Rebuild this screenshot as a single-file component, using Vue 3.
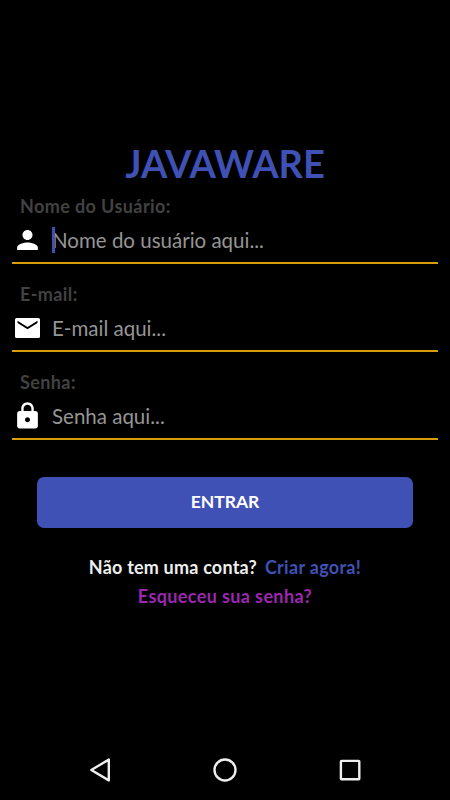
<template>
  <div class="screen">
    <main class="login">
      <h1 class="title">JAVAWARE</h1>

      <div v-for="field in fields" :key="field.id" class="field">
        <div class="label">{{ field.label }}</div>
        <div class="input-row">
          <svg class="icon" viewBox="0 0 24 24"><path :d="field.icon" /></svg>
          <div class="input">
            <span v-if="field.focused" class="cursor"></span>
            <span>{{ field.placeholder }}</span>
          </div>
        </div>
      </div>

      <button class="button">ENTRAR</button>

      <p class="signup">
        <span>Não tem uma conta?</span>
        <a class="create">Criar agora!</a>
      </p>
      <a class="forgot">Esqueceu sua senha?</a>
    </main>

    <nav class="nav-bar">
      <svg viewBox="0 0 30 30"><path d="M6.3 15 L23.8 4.6 V25.4 Z" /></svg>
      <svg viewBox="0 0 30 30"><circle cx="15" cy="15" r="10.5" /></svg>
      <svg viewBox="0 0 30 30"><rect x="5.9" y="5.9" width="18.4" height="18.4" rx="0.6" /></svg>
    </nav>
  </div>
</template>

<script setup>
const fields = [
  {
    id: 'name',
    label: 'Nome do Usuário:',
    placeholder: 'Nome do usuário aqui...',
    focused: true,
    icon: 'M12 12c2.21 0 4-1.79 4-4s-1.79-4-4-4-4 1.79-4 4 1.79 4 4 4zm0 2c-2.8 0-8.3 1.34-8.3 4v2h16.6v-2c0-2.66-5.5-4-8.3-4z'
  },
  {
    id: 'email',
    label: 'E-mail:',
    placeholder: 'E-mail aqui...',
    icon: 'M20.7 4H3.3C2.6 4 2 4.6 2 5.3v13.4c0 .7.6 1.3 1.3 1.3h17.4c.7 0 1.3-.6 1.3-1.3V5.3c0-.7-.6-1.3-1.3-1.3zM20 8l-8 5-8-5V6.2l8 5 8-5z'
  },
  {
    id: 'password',
    label: 'Senha:',
    placeholder: 'Senha aqui...',
    icon: 'M18.3 8H17V6c0-2.76-2.24-5-5-5S7 3.24 7 6v2H5.7c-1.1 0-2 .9-2 2v10c0 1.1.9 2 2 2h12.6c1.1 0 2-.9 2-2V10c0-1.1-.9-2-2-2zm-6.3 9c-1.1 0-2-.9-2-2s.9-2 2-2 2 .9 2 2-.9 2-2 2zm3.1-9H8.9V6c0-1.71 1.39-3.1 3.1-3.1s3.1 1.39 3.1 3.1v2z'
  }
]
</script>

<style>
body {
  background: #000;
}
</style>

<style scoped>
.screen {
  display: flex;
  flex-direction: column;
  box-sizing: border-box;
  height: 800px;
  padding-top: 140px;
  overflow: hidden;
  background: #000;
  font-family: Lato, "Open Sans", sans-serif;
  white-space: nowrap;
}

.login {
  flex: 1;
  display: flex;
  flex-direction: column;
}

.title {
  margin: 0 0 1px;
  height: 47px;
  line-height: 47px;
  text-align: center;
  font-size: 38px;
  font-weight: 700;
  color: #3f51b5;
}

.field {
  box-sizing: border-box;
  height: 88px;
  padding: 8px 12px 0;
}

.label {
  height: 22px;
  line-height: 20px;
  padding-left: 8px;
  font-size: 18px;
  font-weight: 700;
  letter-spacing: 0.4px;
  color: #424242;
}

.input-row {
  display: flex;
  align-items: center;
  height: 44px;
  border-bottom: 2px solid #d69c0a;
}

.icon {
  width: 31px;
  height: 30px;
  fill: #fff;
}

.input {
  position: relative;
  height: 26px;
  margin-left: 9px;
  line-height: 26px;
  font-size: 20.5px;
  color: #959595;
}

.cursor {
  position: absolute;
  left: 0;
  top: 0;
  width: 3px;
  height: 26px;
  background: #3f51b5;
}

.button {
  height: 51px;
  margin: 25px 37px 0;
  padding: 0 0 2px;
  border: 0;
  border-radius: 7px;
  background: #3f51b5;
  font: 700 17.5px Lato, sans-serif;
  color: #fff;
}

.signup {
  display: flex;
  justify-content: center;
  gap: 8px;
  margin: 24px 0 0;
  line-height: 30px;
  font-size: 18px;
  font-weight: 700;
  letter-spacing: 0.2px;
  color: #eee;
}

.create {
  letter-spacing: 0.3px;
  color: #3f51b5;
}

.forgot {
  line-height: 28px;
  text-align: center;
  font-size: 18px;
  font-weight: 700;
  letter-spacing: 0.38px;
  color: #9c27b0;
}

.nav-bar {
  display: flex;
  justify-content: space-between;
  align-items: center;
  height: 60px;
  padding: 0 85px;
}

.nav-bar svg {
  width: 30px;
  height: 30px;
  fill: none;
  stroke: #eee;
  stroke-width: 2.4;
  stroke-linejoin: round;
}
</style>
